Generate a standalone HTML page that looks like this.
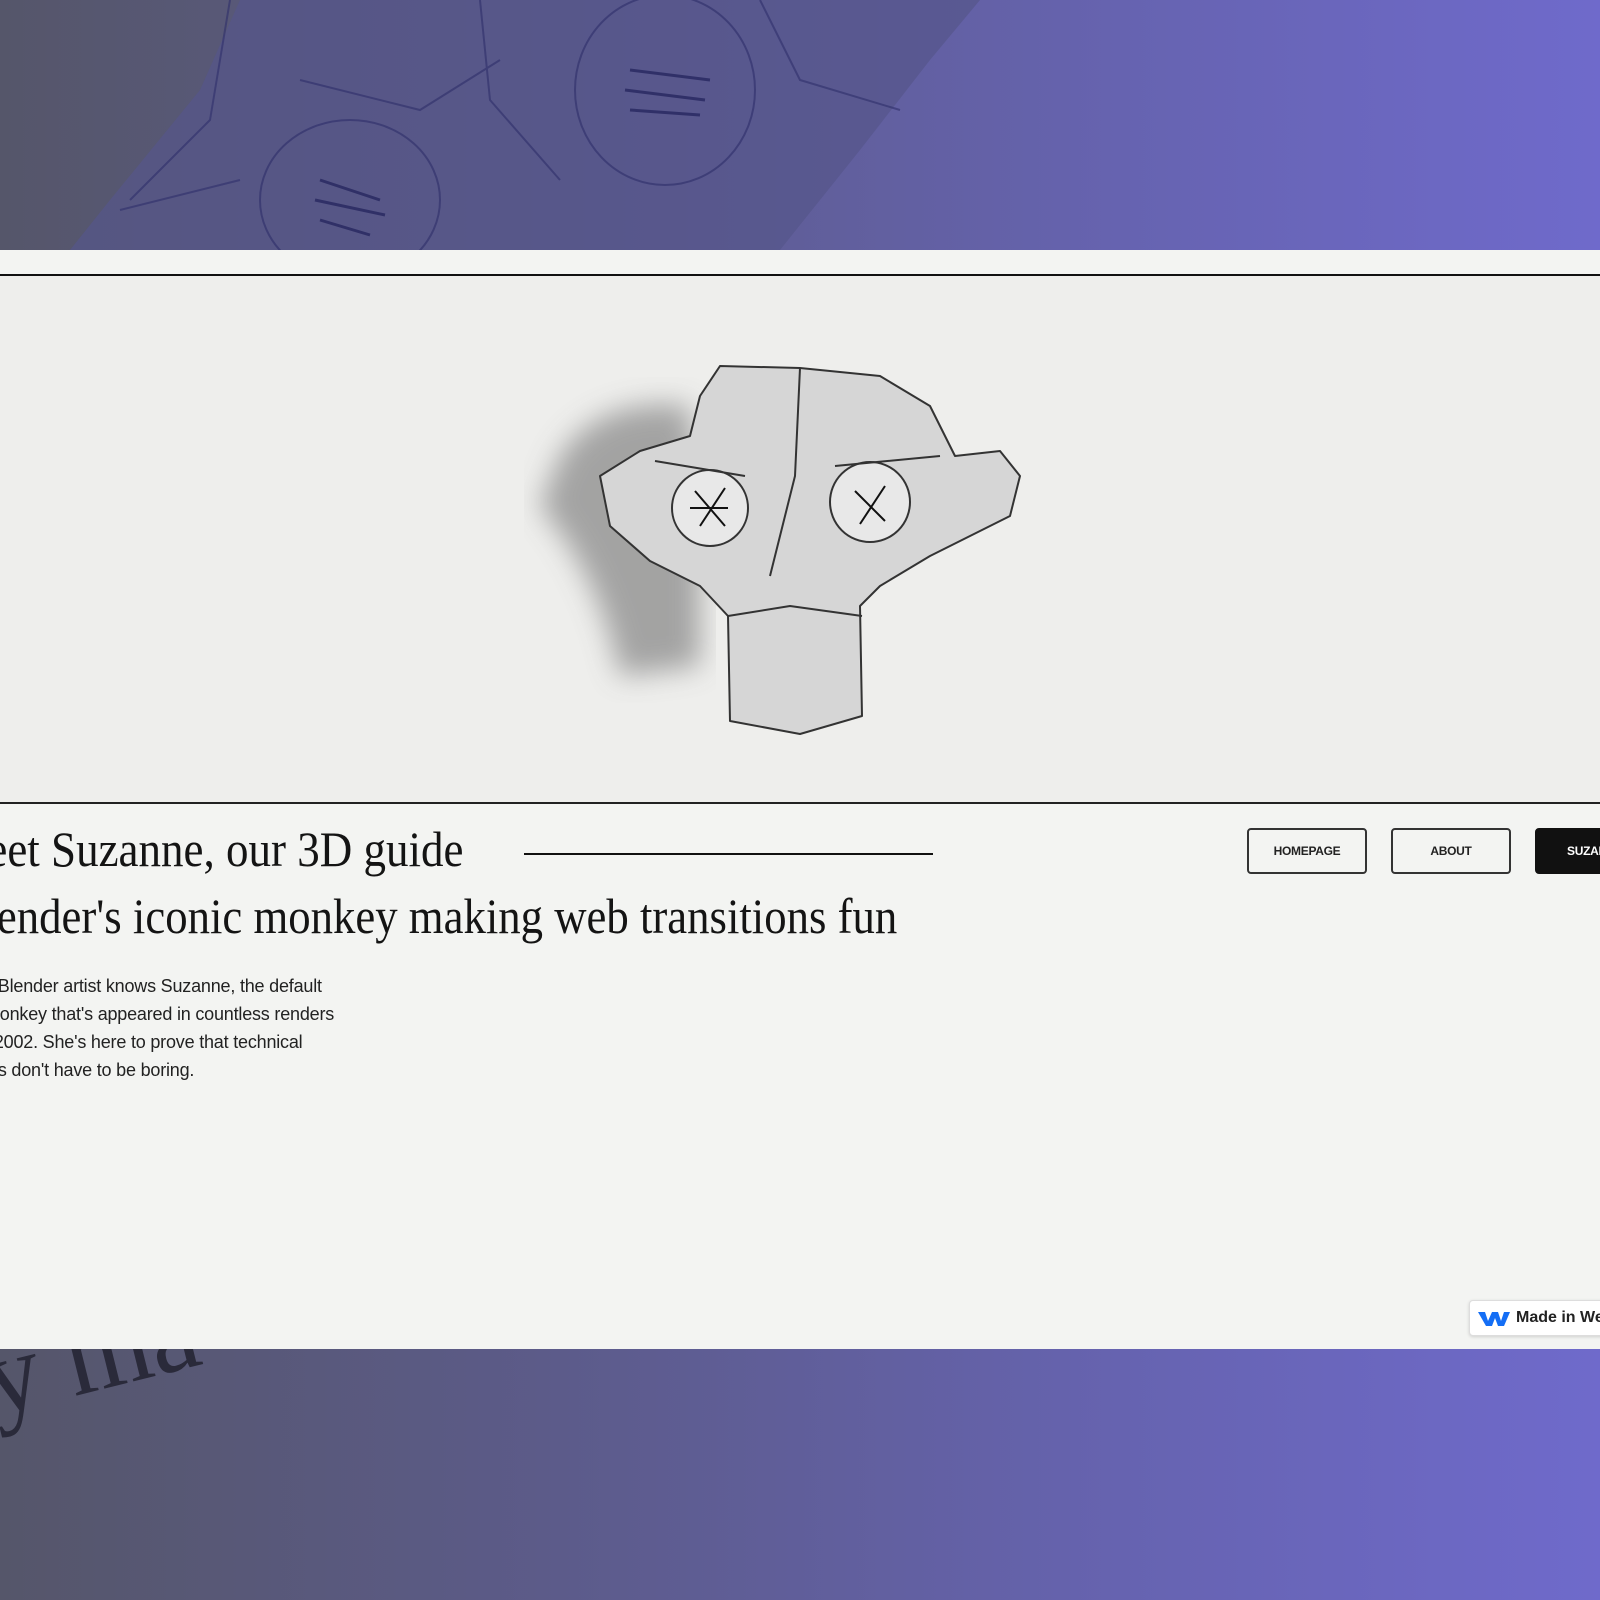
<!DOCTYPE html>
<html><head><meta charset="utf-8"><style>
html,body{margin:0;padding:0;width:1600px;height:1600px;overflow:hidden;background:#f3f4f2;font-family:"Liberation Sans",sans-serif}
.band{position:absolute;left:0;width:1600px;background:linear-gradient(90deg,#55566a 0%,#5c5b8a 35%,#6663b0 70%,#6f6acb 100%)}
.serif{font-family:"Liberation Serif",serif;color:#141414;position:absolute;white-space:nowrap;transform-origin:right bottom}
.btn{position:absolute;top:828px;width:120px;height:46px;border:2px solid #333;border-radius:4px;box-sizing:border-box;font-size:12px;font-weight:bold;display:flex;align-items:center;justify-content:center;color:#222;letter-spacing:-.3px}
.p{position:absolute;font-size:18px;color:#222;white-space:nowrap;letter-spacing:-.2px}
</style></head><body>
<div class="band" style="top:0;height:250px;overflow:hidden">
<svg width="1600" height="250" style="position:absolute;left:0;top:0">
<path d="M70 250 L110 200 L200 90 L240 0 L980 0 L930 60 L860 150 L780 250Z" fill="#55558a" opacity=".7"/>
<g fill="none" stroke="#2e2e6a" stroke-width="2" opacity=".6">
<ellipse cx="665" cy="90" rx="90" ry="95"/><ellipse cx="350" cy="200" rx="90" ry="80"/>
<path d="M230 0 L210 120 L130 200 M480 0 L490 100 L560 180 M300 80 L420 110 L500 60 M760 0 L800 80 L900 110 M120 210 L240 180"/>
</g>
<g stroke="#20205a" stroke-width="3" opacity=".7"><path d="M630 70 L710 80 M625 90 L705 100 M630 110 L700 115 M320 180 L380 200 M315 200 L385 215 M320 220 L370 235"/></g>
</svg></div>
<div style="position:absolute;top:274px;left:0;width:1600px;height:2px;background:#111"></div>
<div style="position:absolute;top:276px;left:0;width:1600px;height:526px;background:#eeeeec"></div>
<div style="position:absolute;top:802px;left:0;width:1600px;height:2px;background:#222"></div>
<svg width="1600" height="526" style="position:absolute;top:276px;left:0">
<defs><filter id="sh"><feGaussianBlur stdDeviation="14"/></filter></defs>
<path d="M560 180 Q600 120 690 130 L700 260 L700 390 L620 400 Q600 300 540 230Z" fill="#8a8a8a" filter="url(#sh)" opacity=".75"/>
<g stroke="#333" stroke-width="2" stroke-linejoin="round">
<path d="M720 90 L800 92 L880 100 L930 130 L955 180 L1000 175 L1020 200 L1010 240 L970 260 L930 280 L880 310 L860 330 L862 440 L800 458 L730 445 L728 340 L700 310 L650 285 L610 250 L600 200 L640 175 L690 160 L700 120Z" fill="#d6d6d6"/>
<circle cx="710" cy="232" r="38" fill="#e8e8e8"/><circle cx="870" cy="226" r="40" fill="#e8e8e8"/>
<path d="M728 340 L790 330 L862 340 M800 92 L795 200 L770 300 M655 185 L745 200 M835 190 L940 180" fill="none"/>
</g>
<g stroke="#111" stroke-width="2"><path d="M695 215 L725 250 M700 250 L725 212 M690 232 L728 232 M855 215 L885 245 M860 248 L885 210"/></g>
</svg>
<div class="serif" style="right:1137px;top:820px;font-size:50px;transform:scaleX(.9)">Meet Suzanne, our 3D guide</div>
<div style="position:absolute;left:524px;top:853px;width:409px;height:2px;background:#111"></div>
<div class="serif" style="right:703px;top:887px;font-size:50px;transform:scaleX(.895)">Blender's iconic monkey making web transitions fun</div>
<div class="btn" style="left:1247px">HOMEPAGE</div>
<div class="btn" style="left:1391px">ABOUT</div>
<div class="btn" style="left:1535px;width:120px;background:#111;border-color:#111;color:#fff;justify-content:flex-start;padding-left:30px">SUZANNE</div>
<div class="p" style="left:-52px;top:976px">Every Blender artist knows Suzanne, the default</div>
<div class="p" style="left:-15px;top:1004px">monkey that's appeared in countless renders</div>
<div class="p" style="left:-52px;top:1032px">since 2002. She's here to prove that technical</div>
<div class="p" style="left:-44px;top:1060px">details don't have to be boring.</div>
<div style="position:absolute;left:1469px;top:1300px;width:180px;height:34px;background:#fff;border:1px solid #ddd;border-radius:4px;box-shadow:0 1px 3px rgba(0,0,0,.15);display:flex;align-items:center;font-size:16px;font-weight:bold;color:#222;white-space:nowrap">
<svg width="32" height="18" style="margin:0 6px 0 8px"><path d="M0 3 H7 L10 12 L14 3 H20 L23 12 L26 3 H32 L26 17 H20 L17 9 L14 17 H8Z" fill="#146ef5"/></svg>Made in Webflow</div>
<div class="band" style="top:1349px;height:251px;overflow:hidden">
<div style="position:absolute;left:-30px;top:-30px;font-family:'Liberation Serif',serif;font-size:110px;color:#2a2a3a;transform:rotate(-14deg);transform-origin:left top">y ma</div>
</div>
</body></html>
